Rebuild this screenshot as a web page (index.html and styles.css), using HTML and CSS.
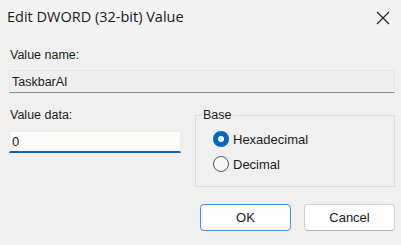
FILE: index.html
```html
<!DOCTYPE html>
<html lang="en">
<head>
    <meta charset="UTF-8">
    <meta name="viewport" content="width=device-width, initial-scale=1.0">
    <title>Edit DWORD (32-bit) Value</title>
    <link rel="stylesheet" href="styles.css">
</head>
<body>

    <div class="titlebar">
        <span class="title">Edit DWORD (32-bit) Value</span>
        <span class="close">
            <svg width="14" height="14" viewBox="0 0 14 14">
                <path d="M1 1 L13 13 M13 1 L1 13" stroke="#1f1f1f" stroke-width="1.1" fill="none"/>
            </svg>
        </span>
    </div>

    <div class="content">
        <label class="caption" for="value_name">Value name:</label>
        <div class="name-field" id="value_name">TaskbarAI</div>

        <div class="row">
            <div class="data-col">
                <label class="caption" for="value_data">Value data:</label>
                <input type="text" id="value_data" class="data-input" value="0">
            </div>

            <fieldset class="base">
                <legend>Base</legend>
                <label class="radio">
                    <input type="radio" name="base" value="hex" checked>
                    <span>Hexadecimal</span>
                </label>
                <label class="radio">
                    <input type="radio" name="base" value="dec">
                    <span>Decimal</span>
                </label>
            </fieldset>
        </div>

        <div class="buttons">
            <button class="btn btn-default">OK</button>
            <button class="btn">Cancel</button>
        </div>
    </div>

</body>
</html>
```

FILE: styles.css
```css
body {
    margin: 0;
    background-color: #f0f0f0;
    font-family: "Liberation Sans", Arial, sans-serif;
    font-size: 12.5px;
    color: #1b1b1b;
}
.titlebar {
    height: 33px;
    display: flex;
    align-items: center;
    justify-content: space-between;
    padding: 0 11px 0 7px;
    background-color: #f3f3f3;
}
.title {
    font-family: "Open Sans", sans-serif;
    font-size: 14.5px;
    color: #1a1a1a;
}
.close {
    display: flex;
    padding-top: 2px;
}
.content {
    padding: 15px 6px 0 9px;
}
.caption {
    display: block;
    line-height: 14px;
    padding-left: 1px;
}
.name-field {
    margin-top: 8px;
    height: 23px;
    line-height: 22px;
    padding-left: 2px;
    background-color: #efefef;
    border: 1px solid #e6e6e6;
    border-bottom-color: #8c8c8c;
    box-sizing: border-box;
}
.row {
    display: flex;
    margin-top: 15px;
}
.data-col {
    width: 172px;
}
.data-input {
    display: block;
    width: 172px;
    height: 22px;
    margin-top: 9px;
    box-sizing: border-box;
    border: 1px solid #ececec;
    border-bottom: 2px solid #0067c0;
    background-color: #fcfcfa;
    font-family: "Liberation Sans", Arial, sans-serif;
    font-size: 13px;
    color: #1b1b1b;
    padding: 0 0 0 2px;
    outline: none;
}
.base {
    flex: 1;
    margin: 0 0 0 14px;
    padding: 5px 0 6px 17px;
    border: 1px solid #dcdcdc;
    height: 79px;
    box-sizing: border-box;
    font-size: 13px;
}
.base legend {
    padding: 0 1px;
    margin-left: -11px;
    line-height: 14px;
    font-size: 12.5px;
}
.radio {
    display: flex;
    align-items: center;
    height: 26px;
    margin-top: -1px;
}
.radio input {
    appearance: none;
    width: 16px;
    height: 16px;
    margin: 0 4px 0 0;
    border-radius: 50%;
    border: 1px solid #5a5a5a;
    background-color: #f6f6f6;
    box-sizing: border-box;
}
.radio input:checked {
    border: 5px solid #0067c0;
    background-color: #ffffff;
}
.buttons {
    display: flex;
    justify-content: flex-end;
    gap: 13px;
    margin-top: 17px;
}
.btn {
    width: 91px;
    height: 27px;
    border: 1px solid #d2d2d2;
    border-bottom-color: #b8b8b8;
    border-radius: 4px;
    background-color: #fdfdfd;
    font-family: "Liberation Sans", Arial, sans-serif;
    font-size: 13px;
    color: #1b1b1b;
}
.btn-default {
    border: 1px solid #4a90d9;
    background-color: #fdfdfd;
}
```
